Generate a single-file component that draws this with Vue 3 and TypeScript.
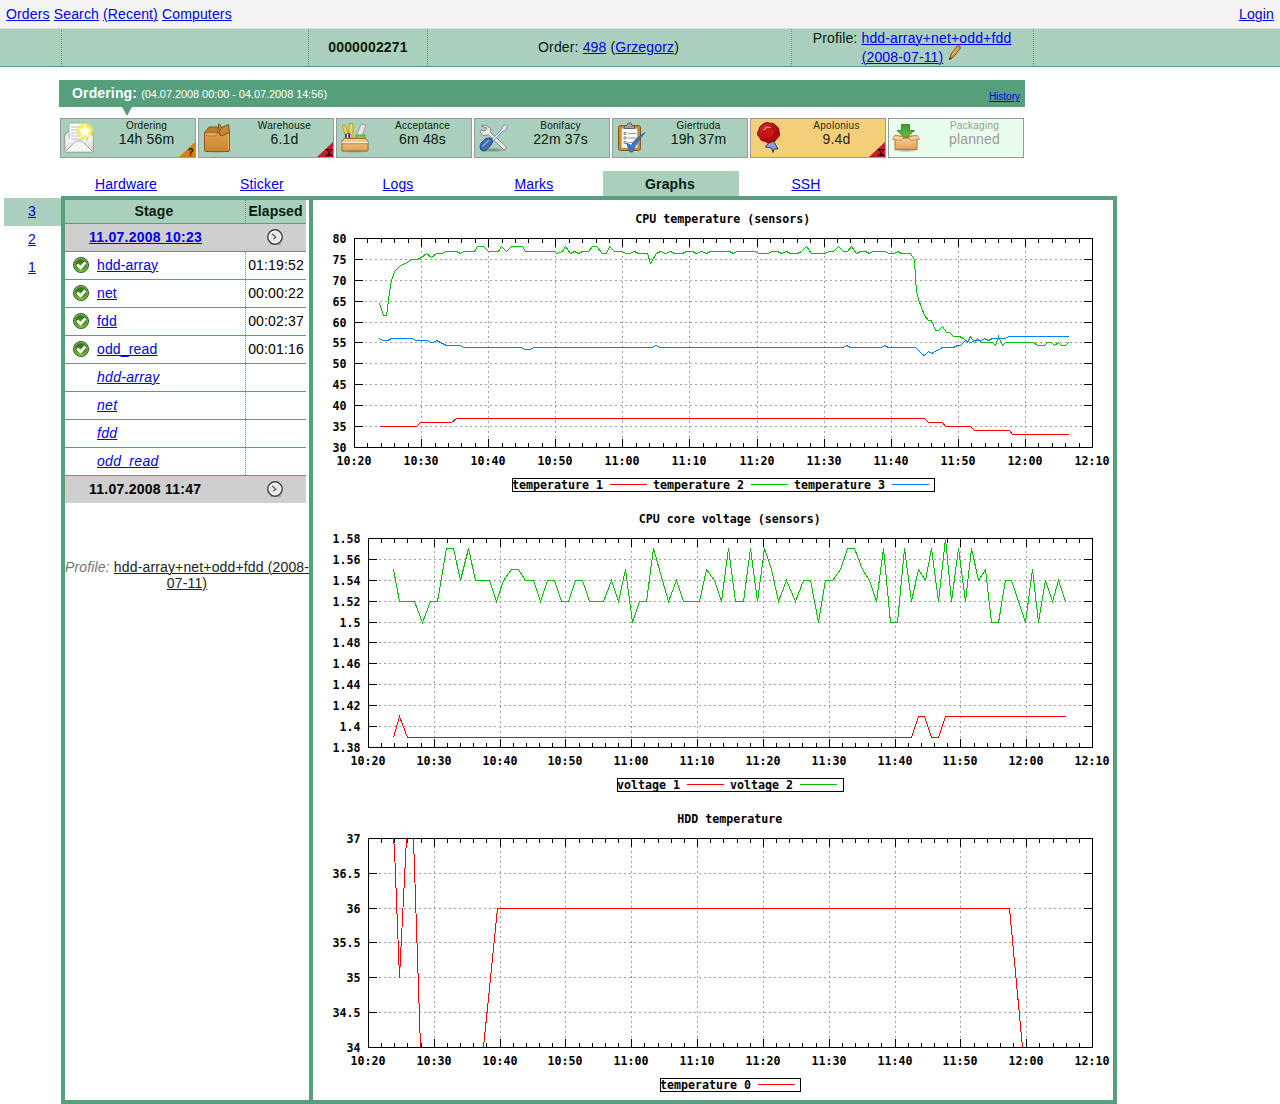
<script setup lang="ts">
type Point = [number, number]

interface Series {
  name: string
  color: string
  segments: Point[][]
}

interface Chart {
  title: string
  left: number
  min: number
  max: number
  yStep: number
  digits: number
  series: Series[]
}

interface Stage {
  name: string
  value: string
  icon: string
  state?: string
  badge?: string
}

const RED = '#ff0000'
const GREEN = '#00c000'
const BLUE = '#0080ff'
const TOP = 38
const BOTTOM = 247
const RIGHT = 779
const CHAR = 7

// Points are [pixel column, value]; flat lists are folded into pairs.
function pairs(flat: number[]): Point[] {
  const out: Point[] = []
  for (let i = 0; i < flat.length; i += 2) out.push([flat[i], flat[i + 1]])
  return out
}

const charts: Chart[] = [
  {
    title: 'CPU temperature (sensors)',
    left: 41,
    min: 30,
    max: 80,
    yStep: 5,
    digits: 0,
    series: [
      {
        name: 'temperature 1',
        color: RED,
        segments: [pairs([66, 35, 103, 35, 107, 36, 138, 36, 143, 37, 611, 37, 615, 36, 629, 36, 632, 35, 657, 35, 661, 34, 696, 34, 699, 33, 755, 33])],
      },
      {
        name: 'temperature 2',
        color: GREEN,
        segments: [pairs([
          66, 64.5, 70, 61.5, 73, 61.5, 76, 67, 78, 70, 81, 72, 87, 73.5, 92, 74, 98, 75, 104, 75, 108, 75.5, 113, 76.5,
          118, 75.5, 123, 76.5, 129, 76.5, 132, 77, 143, 77, 147, 76.5, 150, 77, 161, 77, 164, 78, 170, 78, 175, 77,
          185, 77, 188, 78, 193, 77, 198, 78, 209, 78, 212, 77, 241, 77, 243, 76.5, 249, 77, 252, 78, 257, 76.5,
          261, 77, 265, 76.5, 269, 77, 275, 77, 279, 78, 283, 78, 289, 76.5, 293, 76.5, 296, 78, 301, 77, 309, 77,
          312, 76.5, 316, 76.5, 321, 77, 325, 76.5, 334, 76.5, 337, 74, 343, 76.5, 347, 77, 352, 76.5, 357, 77,
          361, 76.5, 369, 76.5, 373, 77, 379, 77, 383, 76.5, 388, 77, 393, 76.5, 397, 77, 416, 77, 420, 76.5,
          423, 77, 442, 77, 445, 76.5, 455, 76.5, 458, 77, 464, 77, 468, 76.5, 473, 77, 477, 76.5, 484, 76.5,
          488, 77, 493, 78, 498, 76.5, 512, 76.5, 515, 77, 520, 77, 525, 78, 530, 77, 534, 77, 538, 78, 543, 76.5,
          547, 77, 552, 77, 556, 76.5, 559, 77, 572, 77, 575, 76.5, 581, 76.5, 584, 77, 588, 76.5, 597, 76.5,
          601, 75, 602, 70.5, 603, 67.5, 605, 65.5, 608, 63.5, 611, 61.5, 615, 60.5, 618, 60.5, 622, 58, 625, 58,
          629, 59, 633, 57.5, 636, 57.5, 640, 56.5, 646, 56.5, 650, 56, 654, 55, 657, 56.5, 661, 55, 664, 56,
          668, 55, 679, 55, 682, 54.5, 685, 56.5, 689, 54.5, 692, 55, 720, 55, 724, 54.5, 731, 54.5, 734, 55,
          738, 55, 741, 54.5, 745, 55, 748, 54.5, 752, 54.5, 755, 55,
        ])],
      },
      {
        name: 'temperature 3',
        color: BLUE,
        segments: [pairs([
          66, 56, 69, 55.5, 74, 55.5, 78, 56, 99, 56, 102, 55.5, 114, 55.5, 117, 55, 120, 55, 123, 55.5, 133, 54.5,
          147, 54.5, 150, 54, 208, 54, 211, 53.5, 217, 53.5, 220, 54, 338, 54, 343, 54.5, 346, 54, 530, 54,
          533, 54.5, 537, 54, 568, 54, 571, 54.5, 575, 54, 602, 54, 609, 52.3, 611, 52, 615, 53, 618, 52.5,
          629, 54, 640, 54, 644, 54.5, 647, 54.5, 652, 55.5, 657, 55, 662, 55.5, 668, 55.5, 671, 56, 675, 55.5,
          679, 56, 692, 56, 695, 56.5, 755, 56.5,
        ])],
      },
    ],
  },
  {
    title: 'CPU core voltage (sensors)',
    left: 55,
    min: 1.38,
    max: 1.58,
    yStep: 0.02,
    digits: 2,
    series: [
      {
        name: 'voltage 1',
        color: RED,
        segments: [pairs([80, 1.39, 86, 1.41, 94, 1.39, 598, 1.39, 605, 1.41, 611, 1.41, 618, 1.39, 625, 1.39, 632, 1.41, 752, 1.41])],
      },
      {
        name: 'voltage 2',
        color: GREEN,
        segments: [pairs([
          80, 1.55, 86, 1.52, 101, 1.52, 109, 1.5, 117, 1.52, 124, 1.52, 133, 1.57, 140, 1.57, 147, 1.54, 155, 1.57,
          162, 1.54, 176, 1.54, 183, 1.52, 190, 1.54, 198, 1.55, 205, 1.55, 212, 1.54, 220, 1.54, 227, 1.52,
          234, 1.54, 241, 1.54, 248, 1.52, 255, 1.52, 262, 1.54, 269, 1.54, 276, 1.52, 290, 1.52, 298, 1.54,
          305, 1.52, 312, 1.55, 319, 1.5, 326, 1.52, 333, 1.52, 340, 1.57, 349, 1.54, 355, 1.52, 363, 1.54,
          370, 1.52, 386, 1.52, 393, 1.55, 401, 1.54, 408, 1.52, 415, 1.57, 422, 1.52, 430, 1.52, 437, 1.57,
          444, 1.52, 451, 1.57, 458, 1.55, 465, 1.52, 473, 1.54, 482, 1.52, 490, 1.54, 497, 1.54, 505, 1.5,
          512, 1.54, 519, 1.54, 527, 1.55, 534, 1.57, 541, 1.57, 549, 1.55, 556, 1.54, 563, 1.52, 570, 1.57,
          577, 1.5, 584, 1.5, 591, 1.57, 598, 1.52, 605, 1.55, 612, 1.54, 618, 1.57, 625, 1.52, 632, 1.58,
          638, 1.52, 645, 1.57, 652, 1.52, 658, 1.57, 665, 1.54, 672, 1.55, 678, 1.5, 685, 1.5, 692, 1.54,
          698, 1.54, 712, 1.5, 719, 1.55, 725, 1.5, 732, 1.54, 739, 1.52, 745, 1.54, 752, 1.52,
        ])],
      },
    ],
  },
  {
    title: 'HDD temperature',
    left: 55,
    min: 34,
    max: 37,
    yStep: 0.5,
    digits: 1,
    series: [
      {
        name: 'temperature 0',
        color: RED,
        segments: [
          pairs([80, 37, 81, 36.84, 86, 35, 93, 37]),
          pairs([100, 37, 107, 34]),
          pairs([170, 34, 184, 36, 696, 36, 709, 34]),
        ],
      },
    ],
  },
]

const times = ['10:20', '10:30', '10:40', '10:50', '11:00', '11:10', '11:20', '11:30', '11:40', '11:50', '12:00', '12:10']

const yOf = (c: Chart, v: number) => Math.ceil(TOP + ((c.max - v) * (BOTTOM - TOP)) / (c.max - c.min) - 0.501)
const center = (c: Chart) => (c.left + RIGHT) / 2
const tickX = (c: Chart, minutes: number) => Math.round(c.left + ((RIGHT - c.left) * minutes) / 110)

function yTicks(c: Chart) {
  const n = Math.round((c.max - c.min) / c.yStep)
  return Array.from({ length: n + 1 }, (_, i) => {
    const v = Number((c.min + i * c.yStep).toFixed(c.digits))
    return { y: yOf(c, v), label: String(v) }
  })
}

const xMajor = (c: Chart) => times.map((label, i) => ({ x: tickX(c, i * 10), label }))
const xMinor = (c: Chart) => Array.from({ length: 54 }, (_, i) => (i + 1) * 2).filter((m) => m % 10).map((m) => tickX(c, m))
const pathOf = (c: Chart, s: Series) =>
  s.segments.map((seg) => 'M' + seg.map(([x, v]) => `${x},${yOf(c, v)}`).join('L')).join('')

function legend(c: Chart) {
  const item = c.series[0].name.length * CHAR + 50
  const half = (c.series.length * item - 1) / 2
  const x = Math.floor(center(c) - half)
  return {
    x,
    width: Math.ceil(center(c) + half) - x,
    items: c.series.map((s, i) => ({
      name: s.name,
      color: s.color,
      x: x - 0.5 + i * item,
      line: x + i * item + s.name.length * CHAR + 6,
    })),
  }
}

const stages: Stage[] = [
  { name: 'Ordering', value: '14h 56m', icon: 'mail', badge: 'question' },
  { name: 'Warehouse', value: '6.1d', icon: 'box', badge: 'late' },
  { name: 'Acceptance', value: '6m 48s', icon: 'toolbox' },
  { name: 'Bonifacy', value: '22m 37s', icon: 'tools' },
  { name: 'Giertruda', value: '19h 37m', icon: 'clipboard' },
  { name: 'Apolonius', value: '9.4d', icon: 'seal', state: 'current', badge: 'late' },
  { name: 'Packaging', value: 'planned', icon: 'package', state: 'planned' },
]

const tabs = ['Hardware', 'Sticker', 'Logs', 'Marks', 'Graphs', 'SSH']
const runs = ['3', '2', '1']
const tests = [
  { name: 'hdd-array', elapsed: '01:19:52' },
  { name: 'net', elapsed: '00:00:22' },
  { name: 'fdd', elapsed: '00:02:37' },
  { name: 'odd_read', elapsed: '00:01:16' },
  { name: 'hdd-array', elapsed: '' },
  { name: 'net', elapsed: '' },
  { name: 'fdd', elapsed: '' },
  { name: 'odd_read', elapsed: '' },
]
</script>

<template>
  <div class="page">
    <svg class="defs" width="0" height="0">
      <defs>
        <linearGradient id="paper" x1="0" y1="0" x2="0" y2="1"><stop offset="0" stop-color="#fff" /><stop offset="1" stop-color="#d5d5d1" /></linearGradient>
        <linearGradient id="card" x1="0" y1="0" x2="0" y2="1"><stop offset="0" stop-color="#dca04c" /><stop offset="1" stop-color="#c9852f" /></linearGradient>
        <linearGradient id="wood" x1="0" y1="0" x2="0" y2="1"><stop offset="0" stop-color="#f6d09a" /><stop offset="1" stop-color="#dc9e58" /></linearGradient>
        <linearGradient id="leaf" x1="0" y1="0" x2="0" y2="1"><stop offset="0" stop-color="#469a2e" /><stop offset="1" stop-color="#65bd42" /></linearGradient>
        <radialGradient id="glow"><stop offset="0" stop-color="#fff" /><stop offset=".45" stop-color="#fff34e" /><stop offset=".75" stop-color="#f5ee42" stop-opacity=".85" /><stop offset="1" stop-color="#f5ee42" stop-opacity="0" /></radialGradient>
        <radialGradient id="wax" cx=".4" cy=".35"><stop offset="0" stop-color="#e03a30" /><stop offset="1" stop-color="#b30808" /></radialGradient>
        <radialGradient id="ball" cx=".5" cy=".8"><stop offset="0" stop-color="#74ba1c" /><stop offset="1" stop-color="#377c16" /></radialGradient>
        <radialGradient id="shade"><stop offset="0" stop-color="#000" stop-opacity=".35" /><stop offset="1" stop-color="#000" stop-opacity="0" /></radialGradient>
      </defs>
      <symbol id="clock" viewBox="0 0 16 16">
        <rect x="3" y="14" width="11" height="2" fill="#aaa" />
        <circle cx="8" cy="8" r="7.2" fill="#e9e9e6" stroke="#43434d" stroke-width="1.5" />
        <circle cx="8" cy="8" r="5.7" fill="none" stroke="#fff" stroke-width=".9" />
        <path d="M5 4.800l3.800 3.400L6.500 10.200" fill="none" stroke="#444" stroke-width="1.100" />
      </symbol>
      <symbol id="done" viewBox="0 0 16 16">
        <circle cx="8" cy="8" r="7.5" fill="url(#ball)" stroke="#2c6414" />
        <circle cx="8" cy="8" r="6.4" fill="none" stroke="#a5c795" stroke-width=".8" />
        <path d="M4.2 7.5l3.300 3.200 4.900-5.200" fill="none" stroke="#fff" stroke-width="2.800" />
      </symbol>
    </svg>

    <header class="topnav">
      <nav><a href="#">Orders</a> <a href="#">Search</a> <a href="#">(Recent)</a> <a href="#">Computers</a></nav>
      <a href="#">Login</a>
    </header>

    <section class="summary">
      <div class="cell c0"></div>
      <div class="cell c1"></div>
      <div class="cell c2"><b>0000002271</b></div>
      <div class="cell c3"><span>Order: <a href="#">498</a> (<a href="#">Grzegorz</a>)</span></div>
      <div class="cell c4">
        <span>Profile: <a href="#">hdd-array+net+odd+fdd<br>(2008-07-11)</a>
          <svg class="pencil" viewBox="0 0 14 17" width="14" height="17">
            <path d="M1.5 15.5L3 10 9.5 1.8l3 2.2L6 12.5z" fill="#d99436" stroke="#76501d" stroke-width=".9" />
            <path d="M4.3 10.8L10.7 3" stroke="#f6cf79" stroke-width="1" />
            <path d="M9.5 1.8l1.3-1.3 2.4 1.9-.9 1.7z" fill="#ee5146" />
            <path d="M1.2 15.9l.6-2.6 1.9 1.3z" fill="#222" />
          </svg>
        </span>
      </div>
    </section>

    <section class="process">
      <div class="phase">
        <span><b>Ordering:</b> <small>(04.07.2008 00:00 - 04.07.2008 14:56)</small></span>
        <a href="#">History</a>
        <i class="pointer"></i>
      </div>
      <div class="stages">
        <div v-for="s in stages" :key="s.name" class="stage" :class="s.state">
          <svg class="icon" viewBox="0 0 32 32" width="32" height="32">
            <template v-if="s.icon === 'mail'">
              <path d="M2 14L7 8h20l3 6v15.500q0 1.500-1.500 1.500h-25Q2 31 2 29.500z" fill="#f1f1ef" stroke="#8a8d88" />
              <path d="M6 2h18v18l-6 5h-6l-6-5z" fill="#fcfcfc" stroke="#a9aaa7" />
              <path d="M8 6h9M8 9h10M8 12h9M8 15h12M8 18h13" stroke="#bbb" />
              <path d="M2.500 15L13 24h6L29.500 15V30H2.500z" fill="url(#paper)" />
              <path d="M2.500 30.500L12 21q1-1 2-1h4q1 0 2 1l9.500 9.500" fill="#f5f5f3" stroke="#a4a6a1" />
              <circle cx="22" cy="10" r="9" fill="url(#glow)" />
              <path d="M22 3.500l2 4.200 4.500.5-3.200 3.200.8 4.600-4.100-2.200-4.100 2.200.8-4.600-3.200-3.200 4.500-.5z" fill="#fff" />
            </template>
            <template v-else-if="s.icon === 'box'">
              <ellipse cx="16" cy="30.500" rx="15" ry="1.500" fill="url(#shade)" />
              <path d="M3.500 11.500L8 6h8.500l11.500 5.500z" fill="#bd7c2c" stroke="#8f5a19" />
              <path d="M3.500 11.500h25V29q0 1.500-1.500 1.500H5q-1.500 0-1.500-1.500z" fill="url(#card)" stroke="#8f5a19" />
              <path d="M4.500 12.500h23v16" fill="none" stroke="#e8b76c" />
              <path d="M3.500 11.500h13.500l-2.500 3.500H6z" fill="#dfa858" stroke="#9a6420" stroke-width=".6" />
              <path d="M16.500 10.500L18 2.500l2.500 4 7-3 1 8-8 3.500z" fill="#c48638" stroke="#7c4a14" stroke-width=".9" />
              <path d="M20.500 6.500L17.500 12l3 3" fill="none" stroke="#7c4a14" stroke-width=".9" />
            </template>
            <template v-else-if="s.icon === 'toolbox'">
              <ellipse cx="16" cy="30" rx="15" ry="2" fill="url(#shade)" />
              <path d="M3 5l3-1 5 13-3 1zM10 2.500h4V17h-4z" fill="#f1d545" stroke="#a98c1c" stroke-width=".7" />
              <path d="M22 3l5 1-5 14-5-2z" fill="#e4e4e2" stroke="#8f918c" stroke-width=".8" />
              <path d="M6 18v-5l4-1 3 2v4z" fill="#54386c" /><path d="M8.500 13v5M12 13.500V18" stroke="#fff" stroke-width="1.200" />
              <path d="M17 14h9v4h-9z" fill="#83c947" stroke="#4e8d22" stroke-width=".7" />
              <path d="M5 17.500h22l2 3v9.500H3v-9.500z" fill="url(#wood)" stroke="#a56a2a" />
              <path d="M3 21.500h26" stroke="#fff3d4" /><path d="M3 22.800h26" stroke="#b87a38" stroke-width=".8" />
            </template>
            <template v-else-if="s.icon === 'tools'">
              <ellipse cx="16" cy="29" rx="15" ry="2.500" fill="url(#shade)" />
              <path d="M4.500 5l4-1 5 3 .5 5L29 25.500q1 3-2 3.500L11.500 14 6 14.500 3 11l1-2 4 1 2-3z" fill="#e6e6e4" stroke="#7f827f" stroke-width=".9" />
              <path d="M13.500 19.500L24 9l2-4 3-1.500L30.500 5l-1.500 4-4 2L15 21.500z" fill="#d9e3f0" stroke="#6b86ab" stroke-width=".8" />
              <path d="M3 26q0-3 2-5l4-3.500 5-.5 2 3-2 4-4 4.500q-2 1.500-4 1.500-3-1-3-4z" fill="#3d6db0" stroke="#204276" stroke-width=".9" />
              <path d="M5.500 25.500L12 19" stroke="#87acd9" stroke-width="1.500" />
            </template>
            <template v-else-if="s.icon === 'clipboard'">
              <rect x="3.500" y="4.500" width="22" height="25" rx="2" fill="#cb8930" stroke="#86561a" />
              <path d="M6.500 7.500h16v19.500h-16z" fill="#f8f8f7" stroke="#aaa" stroke-width=".7" />
              <path d="M9.500 7.500v-3h2.500l1-2.500h3l1 2.500h2.500v3z" fill="#9d9f9b" stroke="#555" stroke-width=".8" />
              <path d="M9 11.500h2v2H9zM9 16h2v2H9zM9 20.500h2v2H9z" fill="none" stroke="#777" stroke-width=".8" />
              <path d="M13 12.500h8M13 17h8M13 21.500h6" stroke="#999" />
              <path d="M11.500 22l4.500 2.500Q20 17 30 11.500 22 20 17.500 31H15z" fill="#3e79c6" stroke="#24508e" stroke-width=".7" />
            </template>
            <template v-else-if="s.icon === 'seal'">
              <path d="M15.500 22l-3 4 6 1 1.500 4.500 1-3.500h4l-4.500-8z" fill="#8b9fd8" stroke="#27305f" stroke-width=".9" />
              <g transform="translate(2 .5) scale(.92)">
                <path d="M10 2q4-2 6 0 5-1 7 3 4 2 3 6 2 5-2 7-1 4-6 4-4 3-7-.5-5 0-6-4.500-4-3-1-7 0-5 6-8z" fill="url(#wax)" stroke="#790303" />
                <path d="M12 5.500l6 .5 4 5-3 6-7 1-4-5.500z" fill="#c81915" stroke="#8c0707" stroke-width=".8" />
                <path d="M9.500 9.500L12.500 6l5 .5" fill="none" stroke="#f4aaa3" stroke-width="1.200" />
              </g>
            </template>
            <template v-else>
              <ellipse cx="15" cy="29" rx="14" ry="2.500" fill="url(#shade)" />
              <path d="M4 14.500h22V28H4z" fill="#b87631" />
              <path d="M10.500 3.500h8v6h5L14.500 17 6 9.500h4.500z" fill="url(#leaf)" stroke="#317820" stroke-width=".8" />
              <path d="M4 18l11-1 11 1v10.500H4z" fill="url(#wood)" stroke="#b27635" />
              <path d="M4 14l-2.500 4.500 9 1L13 16zM26 14l2.500 4.500-9 1L17 16z" fill="#f5cd94" stroke="#bb8140" stroke-width=".8" />
            </template>
          </svg>
          <div class="info"><small>{{ s.name }}</small><span>{{ s.value }}</span></div>
          <svg v-if="s.badge" class="badge" viewBox="0 0 16 15" width="16" height="15">
            <path d="M16 0V15H0z" :fill="s.badge === 'late' ? '#be2026' : '#d67f13'" />
            <text v-if="s.badge === 'question'" x="8.500" y="14" class="mark">?</text>
            <path v-else d="M8.500 7.500h7M8.500 13.500h7M10 8l4.500 5.500M14.500 8L10 13.500M10.500 12.500h3.500" stroke="#1a0000" fill="none" />
          </svg>
        </div>
      </div>
    </section>

    <nav class="tabs">
      <div v-for="t in tabs" :key="t" :class="{ active: t === 'Graphs' }">
        <b v-if="t === 'Graphs'">{{ t }}</b>
        <a v-else href="#">{{ t }}</a>
      </div>
    </nav>

    <div class="body">
      <ul class="runs">
        <li v-for="r in runs" :key="r" :class="{ active: r === '3' }"><a href="#">{{ r }}</a></li>
      </ul>
      <main class="frame">
        <aside>
          <div class="row head"><div class="name">Stage</div><div class="time">Elapsed</div></div>
          <div class="row mark-row"><div class="name"><a href="#">11.07.2008 10:23</a></div><div class="time"><svg width="16" height="16"><use href="#clock" /></svg></div></div>
          <div v-for="(t, i) in tests" :key="i" class="row" :class="{ pending: !t.elapsed }">
            <div class="name"><svg v-if="t.elapsed" width="16" height="16"><use href="#done" /></svg><a href="#">{{ t.name }}</a></div>
            <div class="time">{{ t.elapsed }}</div>
          </div>
          <div class="row mark-row last"><div class="name">11.07.2008 11:47</div><div class="time"><svg width="16" height="16"><use href="#clock" /></svg></div></div>
          <p class="profile"><i>Profile:</i> <a href="#">hdd-array+net+odd+fdd (2008-<br>07-11)</a></p>
        </aside>
        <div class="charts">
          <svg v-for="c in charts" :key="c.title" class="chart" width="800" height="300" viewBox="-0.5 -0.5 800 300">
            <g class="grid">
              <path v-for="t in yTicks(c).slice(1, -1)" :key="'g' + t.y" :d="`M${c.left},${t.y}H${RIGHT}`" />
              <path v-for="t in xMajor(c).slice(1, -1)" :key="'v' + t.x" :d="`M${t.x},${BOTTOM}V${TOP}`" />
            </g>
            <g class="axis">
              <path v-for="t in yTicks(c)" :key="'y' + t.y" :d="`M${c.left},${t.y}h8.500M${RIGHT},${t.y}h-8.500`" />
              <path v-for="t in xMajor(c)" :key="'x' + t.x" :d="`M${t.x},${BOTTOM}v-8.500M${t.x},${TOP}v8.500`" />
              <path v-for="x in xMinor(c)" :key="'m' + x" :d="`M${x},${BOTTOM}v-4.500M${x},${TOP}v4.500`" />
              <rect :x="c.left" :y="TOP" :width="RIGHT - c.left" :height="BOTTOM - TOP" />
              <rect :x="legend(c).x" y="278" :width="legend(c).width" height="13" />
            </g>
            <g class="label">
              <text :x="center(c) - 0.8" y="22.500" text-anchor="middle">{{ c.title }}</text>
              <text v-for="t in yTicks(c)" :key="'yl' + t.y" :x="c.left - 8" :y="t.y + 4.500" text-anchor="end">{{ t.label }}</text>
              <text v-for="t in xMajor(c)" :key="'xl' + t.x" :x="t.x - 0.5" y="264.500" text-anchor="middle">{{ t.label }}</text>
              <text v-for="l in legend(c).items" :key="l.name" :x="l.x" y="288.500">{{ l.name }}</text>
            </g>
            <g class="plot">
              <path v-for="l in legend(c).items" :key="l.name" :d="`M${l.line},284h37`" :stroke="l.color" />
              <path v-for="s in c.series" :key="s.name" :d="pathOf(c, s)" :stroke="s.color" />
            </g>
          </svg>
        </div>
      </main>
    </div>
  </div>
</template>

<style>
body {
  margin: 0;
  background: #fff;
}
</style>

<style scoped>
.page {
  width: 1280px;
  height: 1104px;
  overflow: hidden;
  font: 14px/19px "Liberation Sans", Arial, Helvetica, sans-serif;
  letter-spacing: 0.15px;
  color: #000;
}
.page * { box-sizing: border-box; }
.defs { position: absolute; }
a { color: #0000ee; text-underline-offset: 1px; text-decoration-thickness: 1px; }

.topnav {
  display: flex;
  justify-content: space-between;
  height: 29px;
  padding: 5px 6px 0;
  background: #f4f4f4;
  border-bottom: 1px solid #dedede;
}

.summary {
  display: flex;
  height: 38px;
  background: #aacfbd;
  border-bottom: 1px solid #559f7c;
  color: #06200f;
}
.cell {
  display: flex;
  align-items: center;
  justify-content: center;
  text-align: center;
  border-right: 1px dotted #559f7c;
}
.c0 { width: 62px; }
.c1 { width: 247px; }
.c2 { width: 119px; }
.c3 { width: 364px; padding-right: 2px; }
.c4 { width: 242px; padding-right: 1px; white-space: nowrap; }
.c4 > span { height: 38px; }
.pencil { margin: -5px 0 1px 5px; }

.process { width: 966px; margin: 13px 0 0 59px; }
.phase {
  position: relative;
  display: flex;
  justify-content: space-between;
  height: 27px;
  padding: 4px 5px 0 13px;
  background: #559f7c;
  color: #fff;
}
.phase small { font-size: 11px; letter-spacing: -0.07px; }
.phase a { font-size: 10px; padding-top: 3px; letter-spacing: 0; }
.pointer {
  position: absolute;
  left: 63px;
  top: 27px;
  border: 5px solid transparent;
  border-top: 9px solid #559f7c;
  border-bottom: 0;
}
.stages { display: flex; gap: 2px; padding: 11px 1px 0; }
.stage {
  position: relative;
  display: flex;
  width: 136px;
  height: 40px;
  background: #aacfbd;
  border: 1px solid #999;
  color: #06200f;
}
.stage .icon { flex: none; margin: 2px 0 0 2px; }
.info { display: flex; flex-direction: column; flex: 1; align-items: center; padding-left: 3px; }
.info small { font-size: 10px; line-height: 13px; letter-spacing: 0.28px; }
.info span { line-height: 15px; }
.current { background: #f3cf79; color: #30280f; }
.planned { background: #e9fdef; color: #999; }
.badge { position: absolute; right: 0; bottom: 0; }
.mark { font: bold 10px "Liberation Sans", sans-serif; fill: #2b1800; }

.tabs { display: flex; height: 25px; margin: 13px 0 0 58px; }
.tabs div { width: 136px; text-align: center; line-height: 26px; }
.tabs div:nth-child(5) { margin-left: 1px; padding-right: 2px; }
.tabs div:nth-child(6) { padding-right: 2px; }
.tabs .active { background: #aacfbd; color: #06200f; }

.body { display: flex; }
.runs { width: 57px; margin: 2px 0 0 4px; padding: 0; list-style: none; }
.runs li { height: 28px; line-height: 27px; text-align: center; padding-right: 1px; }
.runs .active { background: #aacfbd; }
.frame { display: flex; width: 1056px; height: 908px; border: 4px solid #559f7c; }
aside { width: 248px; border-right: 4px solid #559f7c; }
.row { display: flex; width: 241px; height: 28px; border-bottom: 1px solid #559f7c; line-height: 27px; }
.name { display: flex; align-items: center; width: 181px; padding-left: 8px; border-right: 1px dotted #559f7c; }
.name svg { margin: 0 8px 2px 0; }
.time { flex: 1; text-align: center; white-space: nowrap; }
.time svg { display: block; margin: 5px auto 0 21px; }
.head { height: 24px; background: #aacfbd; color: #06200f; font-weight: bold; line-height: 23px; }
.head .name { justify-content: center; padding: 0 2px 0 0; }
.head .time { letter-spacing: 0.05px; padding-right: 1px; }
.mark-row { background: #cfcfcf; font-weight: bold; letter-spacing: 0.25px; }
.mark-row .name { border: 0; padding-left: 24px; }
.last { border: 0; height: 27px; }
.pending .name { padding-left: 32px; font-style: italic; letter-spacing: 0.3px; }
.profile { margin: 56px 0 0; text-align: center; line-height: 16px; white-space: nowrap; }
.profile i { color: #777; }
.profile a { color: #222; }

.charts { display: flex; flex-direction: column; }
.chart { display: block; }
.chart path, .chart rect { fill: none; stroke-width: 1; shape-rendering: crispEdges; }
.grid path { stroke: #a0a0a0; stroke-dasharray: 2 3; }
.axis path, .axis rect { stroke: #000; }
.label text { font: bold 11.63px "DejaVu Sans Mono", "Liberation Mono", monospace; letter-spacing: 0; fill: #000; }
</style>
